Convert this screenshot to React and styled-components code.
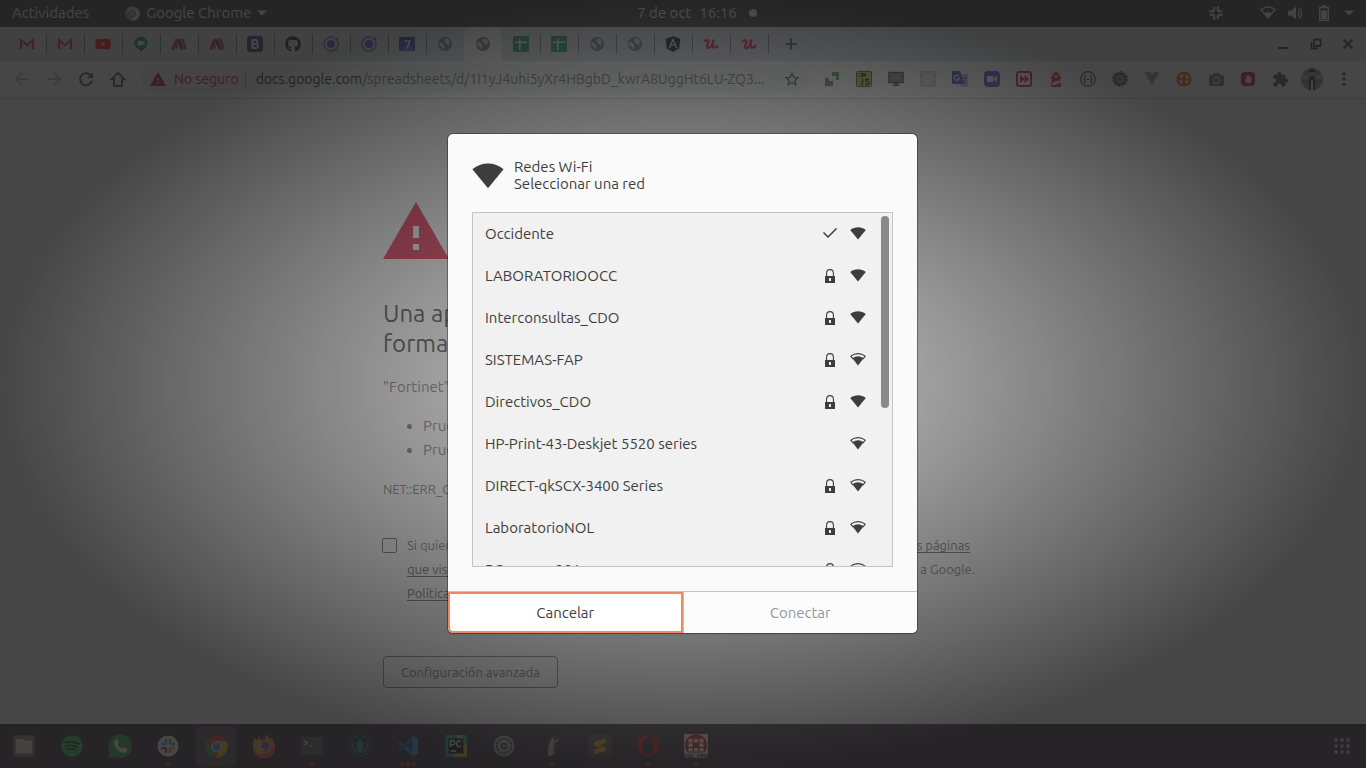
import React from 'react';
import styled, { createGlobalStyle } from 'styled-components';
import {
  FaGithub, FaAngular, FaSpotify,
  FaHandPaper, FaCamera, FaYoutube, FaOpera,
} from 'react-icons/fa';
import { MdExtension } from 'react-icons/md';

const Global = createGlobalStyle`
  *, *::before, *::after { box-sizing: border-box; }
  body { margin: 0; background: #fff; }
  body, button, input { font-family: Ubuntu, 'Noto Sans', 'Open Sans', sans-serif; }
  button { padding: 0; border: 0; background: none; color: inherit; font-size: inherit; }
  svg { display: block; flex: none; }
`;

const Desktop = styled.div`
  position: relative;
  display: flex;
  flex-direction: column;
  min-height: 100vh;
  overflow: hidden;
`;

/* ---------- system bar ---------- */

const TopBar = styled.header`
  display: grid;
  grid-template-columns: 1fr auto 1fr;
  align-items: center;
  height: 27px;
  padding: 0 12px 1px;
  background: #373737;
  color: #f2f2f2;
  font-size: 15px;
  line-height: 20px;
`;

const BarGroup = styled.div`
  display: flex;
  align-items: center;
  justify-content: ${(p) => (p.$end ? 'flex-end' : 'flex-start')};
  gap: ${(p) => p.$gap}px;
`;

const BarButton = styled.button`
  display: flex;
  align-items: center;
  gap: 6px;
  line-height: 20px;
`;

const Clock = styled(BarButton)`
  gap: 8px;
  padding-left: 32px;
`;

/* ---------- browser ---------- */

const TabStrip = styled.div`
  display: flex;
  align-items: center;
  height: 34px;
  padding: 0 10px 0 8px;
  background: #dee1e6;
`;

const Tab = styled.button`
  position: relative;
  display: grid;
  place-items: center;
  width: 38px;
  height: 34px;
  border-radius: 8px 8px 0 0;
  background: ${(p) => (p.$active ? '#fff' : 'transparent')};

  &::after {
    content: '';
    display: ${(p) => (p.$divider ? 'block' : 'none')};
    position: absolute;
    right: -1px;
    top: 7px;
    width: 1px;
    height: 20px;
    background: #74787c;
  }
`;

const NewTab = styled.button`
  display: grid;
  place-items: center;
  width: 46px;
  height: 34px;
`;

const WindowControls = styled.div`
  display: flex;
  gap: 16px;
  margin-left: auto;
`;

const Toolbar = styled.div`
  display: flex;
  align-items: center;
  height: 38px;
  padding: 0 6px 1px;
  border-bottom: 1px solid #c8cacd;
  background: #fff;
`;

const ToolButton = styled.button`
  display: grid;
  place-items: center;
  flex: none;
  width: 32px;
  height: 32px;
`;

const Omnibox = styled.div`
  display: flex;
  align-items: center;
  flex: 1;
  min-width: 0;
  height: 28px;
  margin: 0 6px;
  padding: 0 2px 0 10px;
  border-radius: 14px;
  background: #f1f3f4;
  font-size: 14px;
`;

const Danger = styled.span`
  display: flex;
  align-items: center;
  gap: 8px;
  flex: none;
  margin-right: 10px;
  padding-right: 6px;
  border-right: 1px solid #9aa0a6;
  color: #d50a24;
  line-height: 16px;
`;

const Address = styled.div`
  flex: 1;
  min-width: 0;
  overflow: hidden;
  white-space: nowrap;
  text-overflow: ellipsis;
  color: #5f6368;
  line-height: 20px;

  b { color: #101114; font-weight: 400; }
`;

/* ---------- blocked page ---------- */

const Page = styled.main`
  flex: 1;
  background: #fff;
  color: #5f6368;
`;

const Notice = styled.div`
  max-width: 600px;
  margin: 0 auto;
  padding: 103px 0 36px;
  font-size: 15px;
  line-height: 24px;
`;

const Title = styled.h1`
  margin: 40px 0 16px;
  color: #202124;
  font-size: 24px;
  font-weight: 400;
  line-height: 30px;
`;

const Paragraph = styled.p`
  margin: 0;
`;

const Tips = styled.ul`
  margin: 15px 0;
  padding-left: 40px;
`;

const ErrorCode = styled.div`
  font-size: 13px;
`;

const OptIn = styled.div`
  display: flex;
  gap: 10px;
  margin-top: 32px;
  font-size: 13px;
`;

const Checkbox = styled.input`
  appearance: none;
  flex: none;
  width: 15px;
  height: 15px;
  margin: 5px 0 0 -1px;
  border: 1px solid #4a4d52;
  border-radius: 2px;
`;

const OptInText = styled.label`
  flex: 1;
  padding-right: 8px;
`;

const SplitLine = styled.span`
  display: flex;
  justify-content: space-between;
  padding-right: ${(p) => (p.$short ? 5 : 0)}px;
  white-space: nowrap;
`;

const Link = styled.a`
  color: #4a4d52;
  text-underline-offset: 2px;
`;

const Advanced = styled.button`
  height: 32px;
  margin-top: 51px;
  padding: 0 17px;
  border: 1px solid #6a6e73;
  border-radius: 4px;
  font-size: 13px;
`;

/* ---------- dock ---------- */

const Dock = styled.nav`
  display: flex;
  align-items: center;
  height: 44px;
  background: #3c323c;
`;

const DockItem = styled.button`
  display: grid;
  place-items: center;
  position: relative;
  width: 40px;
  height: 40px;
  margin: 0 4px;
  border-radius: 3px;
  background: ${(p) => (p.$active ? '#5e545e' : 'transparent')};
  margin-left: ${(p) => (p.$last ? 'auto' : '4px')};
`;

const RunDots = styled.span`
  position: absolute;
  bottom: 0;
  left: 0;
  display: flex;
  justify-content: center;
  gap: 2px;
  width: 100%;

  i { width: 4px; height: 4px; border-radius: 2px; background: #e9440f; }
`;

/* ---------- modal ---------- */

const Shade = styled.div`
  position: absolute;
  inset: 0;
  display: flex;
  align-items: center;
  justify-content: center;
  padding: 0 1px 1px 0;
  background:
    radial-gradient(
      ellipse farthest-side at center,
      rgba(0, 0, 0, 0.19),
      rgba(0, 0, 0, 0.725)
    ),
    rgba(255, 255, 255, 0.4);
`;

const Dialog = styled.section`
  width: 469px;
  overflow: hidden;
  border-radius: 5px;
  background: #fafafa;
  box-shadow: 0 0 0 1px rgba(0, 0, 0, 0.3), 0 1px 2px rgba(0, 0, 0, 0.15);
  color: #3d3d3d;
  font-size: 15px;
`;

const DialogBody = styled.div`
  display: flex;
  flex-direction: column;
  gap: 20px;
  padding: 24px;
`;

const DialogHead = styled.div`
  display: flex;
  align-items: center;
  gap: 10px;
  line-height: 17px;
`;

const DialogTitle = styled.h2`
  margin: 0;
  font-size: 15px;
  font-weight: 400;
`;

const DialogHint = styled.p`
  margin: 0;
`;

const ListFrame = styled.div`
  position: relative;
  height: 355px;
  overflow: hidden;
  border: 1px solid #c4c4c4;
  background: #f1f1f1;
`;

const List = styled.ul`
  margin: 0;
  padding: 0;
  list-style: none;
`;

const Network = styled.button`
  display: flex;
  align-items: center;
  gap: 12px;
  width: 100%;
  height: 42px;
  padding: 0 26px 2px 12px;
  text-align: left;

  span { flex: 1; }
`;

const Thumb = styled.div`
  position: absolute;
  top: 3px;
  right: 3px;
  width: 8px;
  height: 192px;
  border-radius: 4px;
  background: #898989;
`;

const Actions = styled.div`
  display: grid;
  grid-template-columns: 1fr 1fr;
  border-top: 1px solid #c4c4c4;
`;

const Action = styled.button`
  height: 41px;
  border: ${(p) => (p.$focused ? '2px solid #f08763' : '0 solid #c4c4c4')};
  border-left-width: ${(p) => (p.$focused ? 2 : 1)}px;
  border-radius: ${(p) => (p.$focused ? '0 0 0 5px' : '0')};
  background: ${(p) => (p.$focused ? '#fff' : '#fcfcfc')};
  color: ${(p) => (p.$focused ? '#3d3d3d' : '#8f999c')};
`;

/* ---------- icons ---------- */

const Svg = ({ s = 16, v = 16, children, ...rest }) => (
  <svg width={s} height={s} viewBox={`0 0 ${v} ${v}`} aria-hidden="true" {...rest}>{children}</svg>
);

const Wifi = ({ size = 16, weak }) => (
  <Svg s={size} fill="currentColor">
    {weak ? (
      <>
        <path d="M.8 5.100C5 1.800 11 1.800 15.200 5.100L13.200 7.600C10.200 5.100 5.800 5.100 2.800 7.600Z" fill="none" stroke="currentColor" strokeWidth="1.100" />
        <path d="M2.800 7.800C6 5.300 10 5.300 13.200 7.800L8 14.400Z" />
      </>
    ) : (
      <path d="M.2 5.100C4.600 1.300 11.400 1.300 15.800 5.100L8 14.600Z" />
    )}
  </Svg>
);

const Lock = () => (
  <Svg fill="#3d3d3d">
    <path d="M4.600 9V6a3.400 3.400 0 0 1 6.800 0V9" fill="none" stroke="#3d3d3d" strokeWidth="1.100" />
    <path fillRule="evenodd" d="M3 9h10v7H3zM7 11v3h2v-3z" />
  </Svg>
);

const Check = () => (
  <Svg><path d="M1.500 7.500 6 12 14.500 3.500" fill="none" stroke="#3d3d3d" strokeWidth="1.500" /></Svg>
);

const Gmail = () => (
  <Svg><path d="M2 13V4l6 5 6-5v9" fill="none" stroke="#d93025" strokeWidth="2.200" /></Svg>
);

const Meet = () => (
  <Svg>
    <circle cx="8" cy="7" r="6.500" fill="#00897b" />
    <path d="M5 12h6l-2.500 4z" fill="#00897b" />
    <path d="M4.500 4.800h4.800v1.500l2-1.300v4.300l-2-1.300v1.500H4.500z" fill="#fff" />
  </Svg>
);

const Blades = () => (
  <Svg>
    <path d="M4.500 2.500h3L3.600 13.500H0z" fill="#d3204e" />
    <path d="M7 4 9 2.500 13 13.500H9.800L6 6.500z" fill="#453a94" />
    <path d="M5 6.500 7 11l-1.300 2.500L4 9.500zM10 2.500h2.500L16 13.500h-2.500z" fill="#d3204e" />
  </Svg>
);

const Bootstrap = () => (
  <Svg>
    <rect width="16" height="16" rx="3" fill="#4b2478" />
    <path d="M4.500 3h4.700a2.500 2.500 0 0 1 1 4.600A2.800 2.800 0 0 1 9.400 13H4.500zM6.700 7h2a1.050 1.050 0 0 0 0-2.100h-2zm0 4.100h2.200a1.200 1.200 0 0 0 0-2.400H6.700z" fill="#fff" fillRule="evenodd" />
  </Svg>
);

const Ionic = () => (
  <Svg>
    <path d="M10.800 1.600A7 7 0 1 0 14.500 5.400" fill="none" stroke="#6466e0" strokeWidth="1.500" />
    <circle cx="8" cy="8" r="4" fill="#4f52d6" />
    <circle cx="13.500" cy="3" r="1.600" fill="#4f52d6" />
  </Svg>
);

const Seven = () => (
  <Svg>
    <path d="M0 1h16v14H0z" fill="#3340b4" />
    <path d="M0 1h16l-8 4z" fill="#232c86" />
    <path d="M0 15l5-5h6l5 5z" fill="#5068dc" />
    <path d="M5.500 5h5.200L8 12.500" fill="none" stroke="#fff" strokeWidth="1.600" />
  </Svg>
);

const Globe = () => (
  <Svg>
    <circle cx="8" cy="8" r="7" fill="#70757a" />
    <path d="M2 7q1.500-1.500 3-.5T7 9t0 4.500L5 11 2.500 9.500zM8.500 2.500q3-.5 4.800 2.500-1.300.3-1.500 1.500t1.800 1.500Q12 9.500 10.200 8.500T8.500 6q-1.500-.5-1.500-1.500t1.500-2z" fill="#dee1e6" />
  </Svg>
);

const Sheets = () => (
  <Svg>
    <rect width="16" height="16" rx="1" fill="#0a9a52" />
    <path d="M6.800 3v11M2 6.200h12" stroke="#fff" strokeWidth="1.600" />
  </Svg>
);

const Udemy = () => (
  <Svg fill="none" stroke="#e60f50">
    <path d="M1.500 5.500C4 3.500 6 4 5.200 6.500 4 10 3.500 12 5.500 12s4-4 5-8.500C9.500 8 9.300 11.500 11 11.700s2.500-1 4-2.200" strokeWidth="2.300" />
  </Svg>
);

const SlackMark = () => (
  <Svg fill="none" stroke="#f2f2f2" strokeWidth="2" strokeLinecap="round">
    <path d="M6.200 5.500V2.500M5.500 6.200H2M9.800 2v4M10.500 6.200H13.500M9.800 10.500v3M10.500 9.800H14M6.200 14v-4M5.500 9.800H2.500" />
  </Svg>
);

const ChromeIcon = ({ s, mono }) => (
  <Svg s={s} v="24">
    <circle cx="12" cy="12" r="11.500" fill={mono ? '#bdbdbd' : '#ea4335'} />
    <path d="M2.100 6.200 8 15l4 1.500-3.500 7A11.500 11.500 0 0 1 2.100 6.200z" fill={mono ? '#8e8e8e' : '#34a853'} />
    <path d="M12 6.500h10.100A11.500 11.500 0 0 1 11 23.500L17 14z" fill={mono ? '#e8e8e8' : '#fbbc05'} />
    <circle cx="12" cy="12" r="5.400" fill={mono ? '#606060' : '#fff'} />
    <circle cx="12" cy="12" r="4.200" fill={mono ? '#aaa' : '#4285f4'} />
  </Svg>
);

const Warning = ({ w = 16, hole = '#f1f3f4', fill = '#c5101f' }) => (
  <svg width={w} height={Math.round(w * 0.86)} viewBox="0 0 66 57" aria-hidden="true">
    <path d="M33 0 66 57H0z" fill={fill} />
    <path d="M30 24h6v12h-6zM30 42h6v6h-6z" fill={hole} />
  </svg>
);

const Caret = () => (
  <svg width="10" height="6" viewBox="0 0 10 6" aria-hidden="true"><path d="M0 .5h10L5 5.500z" fill="currentColor" /></svg>
);

const Arrow = ({ flip }) => (
  <Svg><path d={flip ? 'M1 8h13M8 2l6 6-6 6' : 'M15 8H2M8 2 2 8l6 6'} fill="none" stroke="#b9bcc0" strokeWidth="1.800" /></Svg>
);

const Reload = () => (
  <Svg>
    <path d="M13.200 5A6 6 0 1 0 14 9.500" fill="none" stroke="#4a4d52" strokeWidth="2" />
    <path d="M15 1v6H9z" fill="#4a4d52" />
  </Svg>
);

const Home = () => (
  <Svg><path d="M8 1.800 1.500 8.300H4V15h8V8.300h2.500z" fill="none" stroke="#4a4d52" strokeWidth="1.900" /></Svg>
);

const Star = () => (
  <Svg s={14}><path d="M8 1.500l2 4.600 5 .4-3.800 3.300 1.200 4.900L8 12l-4.400 2.700 1.200-4.900L1 6.500l5-.4z" fill="none" stroke="#4a4d52" strokeWidth="1.500" /></Svg>
);

const Plus = () => (
  <Svg s={14}><path d="M8 1.500v13M1.500 8h13" stroke="#3c4043" strokeWidth="2" /></Svg>
);

const tabs = [
  ['Gmail', <Gmail />], ['Gmail', <Gmail />], ['YouTube', <FaYoutube size={16} color="#f00" />],
  ['Meet', <Meet />], ['Panel', <Blades />], ['Panel', <Blades />], ['Bootstrap', <Bootstrap />],
  ['GitHub', <FaGithub size={16} color="#14181c" />], ['Ionic', <Ionic />], ['Ionic', <Ionic />],
  ['Calendario', <Seven />], ['Página', <Globe />], ['Error de privacidad', <Globe />],
  ['Hoja', <Sheets />], ['Hoja', <Sheets />], ['Página', <Globe />], ['Página', <Globe />],
  ['Angular', <FaAngular size={18} color="#05090c" />], ['Udemy', <Udemy />], ['Udemy', <Udemy />],
];
const activeTab = 12;

const extensions = [
  ['Capturar', <Svg><path d="M8 1h7v8h-3V5H8z" fill="#3f9a45" /><path d="M1 7h4v3h4v5H1z" fill="#6b6f74" /></Svg>],
  ['JavaScript', (
    <Svg>
      <rect x=".5" y=".5" width="15" height="15" rx="1" fill="#c8ba1c" stroke="#4a4410" />
      <rect x="2" y="2" width="8" height="4" rx="2" fill="#222" /><circle cx="4" cy="4" r="1.200" fill="#ddd" />
      <path d="M6.500 7.500V12q0 1.700-2 1.700M13 8.500q-3.500-1-3.300.8c.2 1.700 3.500.8 3.300 2.900-.2 2-2.700 1.500-3.800.8" fill="none" stroke="#111" strokeWidth="1.500" />
    </Svg>
  )],
  ['Pantalla', <Svg><rect x="1" y="1.500" width="14" height="10" fill="#6f8a5c" stroke="#2c2f33" strokeWidth="1.400" /><path d="M6.500 12h3v1.500h2V15h-7v-1.500h2z" fill="#4a4d52" /></Svg>],
  ['React', (
    <Svg>
      <rect width="16" height="16" fill="#cdcfd1" />
      <g fill="none" stroke="#f4f4f4"><ellipse cx="8" cy="8" rx="6" ry="2.400" /><ellipse cx="8" cy="8" rx="6" ry="2.400" transform="rotate(60 8 8)" /><ellipse cx="8" cy="8" rx="6" ry="2.400" transform="rotate(120 8 8)" /></g>
    </Svg>
  )],
  ['Traductor', (
    <Svg>
      <path d="M5 3h11v13H9z" fill="#b8bbbf" /><path d="M0 0h8l4 13H0z" fill="#2347cf" />
      <path d="M7 5A2.600 2.600 0 1 0 7.500 7H5.200" fill="none" stroke="#fff" strokeWidth="1.200" />
      <path d="M10 7h5M12.500 6v1M11 12c2-1 3-3 3-5M11 8.500l3.500 4" fill="none" stroke="#55595e" />
    </Svg>
  )],
  ['Zoom', <Svg><rect width="16" height="16" rx="4" fill="#2d4fd8" /><path d="M3 5h6.500v6H3zM10.300 7 13 5v6l-2.700-2z" fill="#fff" /></Svg>],
  ['Adelantar', <Svg><rect x="1" y="1" width="14" height="14" rx="2" fill="none" stroke="#d00a26" strokeWidth="2" /><path d="M4 4l4.500 4L4 12zM8.500 4 13 8l-4.500 4z" fill="#d00a26" /></Svg>],
  ['Lighthouse', <Svg><path d="M4.500 5.500 4.800 3 8 .3 11.200 3l.3 2.500H13V8h-1l1 8H3l1-8H3V5.500z" fill="#e01410" /><path d="M6 3.500h4V7H6z" fill="#d8ac48" /><path d="M4.500 11.500l7-2.500.5 3-7.800 2.700z" fill="#fff" /></Svg>],
  ['JSON', <Svg><circle cx="8" cy="8" r="7.300" fill="none" stroke="#3a3a3a" strokeWidth="1.200" /><path d="M6 4.500q-1.500 0-1.300 1.700T3.500 8q1.400 0 1.200 1.800T6 11.500M10 4.500q1.500 0 1.300 1.700T12.500 8q-1.400 0-1.200 1.800T10 11.500M6.500 8.500h3" fill="none" stroke="#3a3a3a" strokeWidth="1.200" /></Svg>],
  ['Ajustes', <Svg><circle cx="8" cy="8" r="6.700" fill="#666" stroke="#5a5a5a" strokeWidth="2.400" strokeDasharray="2 1.500" /><circle cx="8" cy="8" r="3.600" fill="#bbb" /><circle cx="8" cy="8" r="2" fill="#555" /></Svg>],
  ['Vue', <Svg><path d="M0 1h6l2 3.500L10 1h6L8 15z" fill="#a4a7aa" /><path d="M3 1h3l2 3.500L10 1h3L8 9.800z" fill="#85888c" /></Svg>],
  ['Recursos', <Svg><circle cx="8" cy="8" r="7.600" fill="#e85a14" /><circle cx="8" cy="8" r="4" fill="none" stroke="#fff" strokeWidth="2.600" strokeDasharray="3.140 3.140" strokeDashoffset="-1.570" /></Svg>],
  ['Cámara', <FaCamera size={15} color="#74787c" />],
  ['Bloqueador', <Svg><rect x="1" y="1" width="14" height="14" rx="4" fill="#d8081a" /><g transform="translate(4 4)"><FaHandPaper size={8} color="#fff" /></g></Svg>],
  ['Extensiones', <MdExtension size={17} color="#4a4f56" />],
  ['Perfil', (
    <Svg s={22} v="22">
      <circle cx="11" cy="11" r="11" fill="#8c8f88" /><path d="M1 7h20v4H1z" fill="#b4bab4" />
      <path d="M8 8h6l1 7h-1v7H8v-7H7z" fill="#4a352c" /><path d="M10 12h2v10h-2z" fill="#e6dfd4" /><circle cx="11" cy="5.500" r="3" fill="#b58266" /><path d="M8 4a3 3 0 0 1 6 0z" fill="#1e1512" />
    </Svg>
  )],
  ['Menú', <Svg fill="#4a4d52"><circle cx="8" cy="2.800" r="1.700" /><circle cx="8" cy="8" r="1.700" /><circle cx="8" cy="13.200" r="1.700" /></Svg>],
];

const dockItems = [
  { name: 'Archivos', icon: <Svg s={22} v="22"><rect width="22" height="22" rx="2" fill="#7d7563" /><rect x="1.500" y="1.500" width="19" height="19" rx="1" fill="#968e7b" /><path d="M3 6q0-2 2-2h5l1.500 1.500H17q2 0 2 2V17q0 1-1 1H4q-1 0-1-1z" fill="#f0ede6" /></Svg> },
  { name: 'Spotify', icon: <FaSpotify size={22} color="#1ed760" /> },
  { name: 'WhatsApp', icon: (
    <Svg s={24} v="24">
      <path d="M12 0a12 12 0 1 1-5.500 22.600L0 24l1.800-6A12 12 0 0 1 12 0z" fill="#35b04f" />
      <path d="M7.500 5.500 9.500 5 11 9l-1.500 1.500Q11 13.500 14 14.800l1.700-1.600 3.600 1.800-.6 2.500q-1.500 2-5 .8-6-2-7.500-8-.6-3 1.300-4.800z" fill="#fff" />
    </Svg>
  ) },
  { name: 'Slack', run: 1, icon: (
    <Svg s={22} v="22">
      <circle cx="11" cy="11" r="10.500" fill="#fff" />
      <g fill="none" strokeWidth="2.200" strokeLinecap="round">
        <path d="M9 5v4M5 9h3" stroke="#36c5f0" /><path d="M13 5v3.500M17 9h-3" stroke="#2eb67d" />
        <path d="M13 13.500V17M17 13h-3" stroke="#ecb22e" /><path d="M9 13.500V17M5 13h3.500" stroke="#e01e5a" />
      </g>
    </Svg>
  ) },
  { name: 'Chrome', run: 1, active: true, icon: <ChromeIcon s={23} /> },
  { name: 'Firefox', icon: (
    <Svg s={24} v="24">
      <path d="M2 5.500 3 4l2 2.500L7 3l2 3 3.500-1L14 0q2 3 4 4.500l1-1Q23 8 23 13a11 11 0 0 1-22 0Q.8 9 2 5.500z" fill="#ff9a2e" />
      <path d="M23 12A11 11 0 0 1 1.200 15Q5 21 12 20q8-1.500 7-9z" fill="#ff4f5e" />
      <circle cx="12" cy="12.500" r="5" fill="#7a4bd6" /><path d="M4 8q4-2 7 1l-2 2.500Q10 15 14 14q-1 3.500-5 3-5-1.500-5-9z" fill="#ffb13b" />
    </Svg>
  ) },
  { name: 'Terminal', run: 1, icon: <Svg s={22} v="22"><rect y="2" width="22" height="18" rx="2" fill="#5c635e" /><path d="M3 6l3.500 2L3 10M7 11h4" fill="none" stroke="#f4f4f4" strokeWidth="1.200" /></Svg> },
  { name: 'GitKraken', icon: <Svg s={22} v="22"><circle cx="11" cy="11" r="10.400" fill="#2f3a3c" stroke="#5a8f8c" /><path d="M11 3q-3.500 4-3.500 8 1.500 1 2 7h3q.5-6 2-7Q14.500 7 11 3z" fill="#2fa596" /><path d="M5 6q-3 6 3 11M17 6q3 6-3 11" fill="none" stroke="#2f8f86" strokeWidth="1.400" /></Svg> },
  { name: 'Visual Studio Code', run: 3, icon: <Svg s={22} v="22"><path d="M15.500 1 21 3.500v15L15.500 21 1 8.500 3 6.500l12.500 9z" fill="#2489ca" /><path d="M15.500 1 21 3.500v15L15.500 21V6.500L3 16 1 13.800z" fill="#1070b3" /><path d="M15.500 1 21 3.500v15L15.500 21z" fill="#3ba7e8" /></Svg> },
  { name: 'PyCharm', icon: (
    <Svg s={22} v="22">
      <path d="M0 0h22v22H0z" fill="#21a87a" /><path d="M12 0h4l6 10v12H8z" fill="#c9c43a" /><path d="M16 0h6v11z" fill="#2bb08a" /><path d="M0 14h8l-2 8H0z" fill="#2a93c4" /><path d="M3.500 3.500h15v15h-15z" fill="#101010" />
      <path d="M5.500 12V5.800H8q1.800.2 1.800 1.900T8 9.700H5.500M16.200 6.700Q12 4.500 11.700 8.800q.3 4.400 4.500 2.200M5.500 16h5.500" fill="none" stroke="#fff" strokeWidth="1.400" />
    </Svg>
  ) },
  { name: 'Configuración', icon: <Svg s={22} v="22"><circle cx="11" cy="11" r="10.500" fill="#b4b4b4" /><circle cx="11" cy="11" r="8.300" fill="#4a474b" /><circle cx="11" cy="11" r="6.300" fill="none" stroke="#c4c4c4" strokeWidth="2" strokeDasharray="2 1.300" /><circle cx="11" cy="11" r="4.500" fill="none" stroke="#c4c4c4" strokeWidth="2" /><path d="M10 9l3 2-3 2z" fill="#c4c4c4" /></Svg> },
  { name: 'DBeaver', run: 1, icon: <Svg s={22} v="22"><path d="M4 3q8-4 13 0 4 8-1 17H6Q2 12 4 3z" fill="#3f3634" /><path d="M7 21Q6 10 11 3q5-3 7 1-.5 2.500-4 3-2 5-1 12-3 2-6 2z" fill="#b9b2a6" /><path d="M12 3.500q3-3 5.500.5L14 6z" fill="#4a3b33" /><path d="M14 8q-2 5-1 11 3-1 4-4 1-5-3-7z" fill="#5a4c40" /></Svg> },
  { name: 'Sublime Text', icon: <Svg s={24} v="24"><rect width="24" height="24" rx="2" fill="#4e4e4e" /><path d="M18 4v5l-7 2.300 7 2.200v3.500L6 20.500V16l7-2.300-7-2.200V8z" fill="#ff9800" /></Svg> },
  { name: 'Opera', run: 1, icon: <FaOpera size={22} color="#e8101c" /> },
  { name: 'SSL VPN', run: 1, icon: (
    <Svg s={24} v="24">
      <path d="M0 0h24v24H0z" fill="#e8e8e8" /><circle cx="12" cy="11" r="11" fill="#d0241c" />
      <path d="M4.500 5h4v3.500h-4zM10 5h4v3.500h-4zM15.500 5h4v3.500h-4zM4.500 9.500h4V13h-4zM15.500 9.500h4V13h-4zM4.500 14h4v3.500h-4zM10 14h4v3.500h-4zM15.500 14h4v3.500h-4z" fill="#fff" />
      <path d="M0 18.500h24V24H0z" fill="#ddd" />
      <text x="12" y="23.500" textAnchor="middle" fontSize="6" fontWeight="700" fontFamily="Liberation Sans, sans-serif" fill="#222">SSL VPN</text>
    </Svg>
  ) },
];

const networks = [
  { name: 'Occidente', mark: 'check' },
  { name: 'LABORATORIOOCC', mark: 'lock' },
  { name: 'Interconsultas_CDO', mark: 'lock' },
  { name: 'SISTEMAS-FAP', mark: 'lock', weak: true },
  { name: 'Directivos_CDO', mark: 'lock' },
  { name: 'HP-Print-43-Deskjet 5520 series', weak: true },
  { name: 'DIRECT-qkSCX-3400 Series', mark: 'lock', weak: true },
  { name: 'LaboratorioNOL', mark: 'lock', weak: true },
  { name: 'PCcamara 201', mark: 'lock', weak: true },
];

export default function App() {
  return (
    <>
      <Global />
      <Desktop>
        <TopBar>
          <BarGroup $gap={36}>
            <BarButton>Actividades</BarButton>
            <BarButton><ChromeIcon s={15} mono />Google Chrome<Caret /></BarButton>
          </BarGroup>
          <Clock>
            <span>7 de oct</span><span>16:16</span>
            <Svg s={16}><circle cx="8" cy="8" r="4" fill="#f2f2f2" /></Svg>
          </Clock>
          <BarGroup $gap={12} $end>
            <SlackMark />
            <Svg s={12} v="12" />
            <Svg><path d="M1 4.500q7-5 14 0L8 13z" fill="none" stroke="#f2f2f2" strokeWidth="1.300" /><path d="M4.500 8.300q3.500-2 7 0L8 13z" fill="#f2f2f2" /></Svg>
            <Svg><path d="M0 5.500h3.500L8 1.500v13l-4.500-4H0z" fill="#f2f2f2" /><path d="M10 5q2 3 0 6M11.500 2.500q4 5.500 0 11" fill="none" stroke="#f2f2f2" strokeWidth="1.300" /></Svg>
            <Svg><path d="M3.700 2.500h8.600v12.800H3.700zM6 1h4" fill="none" stroke="#f2f2f2" strokeWidth="1.400" /><path d="M5.200 5.500h5.600v8.500H5.200z" fill="#f2f2f2" /></Svg>
            <Caret />
          </BarGroup>
        </TopBar>

        <TabStrip>
          {tabs.map(([name, icon], i) => (
            <Tab key={i} aria-label={name} $active={i === activeTab} $divider={i !== activeTab && i !== activeTab - 1}>
              {icon}
            </Tab>
          ))}
          <NewTab aria-label="Nueva pestaña"><Plus /></NewTab>
          <WindowControls>
            <button aria-label="Minimizar"><Svg><path d="M2 12h10" stroke="#303236" strokeWidth="2" /></Svg></button>
            <button aria-label="Restaurar"><Svg><path d="M6 3.500h6.500V10H6zM3.500 6v6.500H10" fill="none" stroke="#303236" strokeWidth="1.800" /></Svg></button>
            <button aria-label="Cerrar"><Svg><path d="M3.500 3.500l9 9M12.500 3.500l-9 9" stroke="#303236" strokeWidth="2" /></Svg></button>
          </WindowControls>
        </TabStrip>

        <Toolbar>
          <ToolButton aria-label="Atrás"><Arrow /></ToolButton>
          <ToolButton aria-label="Adelante"><Arrow flip /></ToolButton>
          <ToolButton aria-label="Recargar"><Reload /></ToolButton>
          <ToolButton aria-label="Inicio"><Home /></ToolButton>
          <Omnibox>
            <Danger><Warning />No seguro</Danger>
            <Address><b>docs.google.com</b>/spreadsheets/d/1I1yJ4uhi5yXr4HBgbD_kwrA8UggHt6LU-ZQ3...</Address>
            <ToolButton aria-label="Añadir a favoritos"><Star /></ToolButton>
          </Omnibox>
          {extensions.map(([name, icon]) => (
            <ToolButton key={name} aria-label={name}>{icon}</ToolButton>
          ))}
        </Toolbar>

        <Page>
          <Notice>
            <Warning w={66} hole="#fff" fill="#e3082f" />
            <Title>Una aplicación impide que Chrome se conecte de<br />forma segura a este sitio web</Title>
            <Paragraph>"Fortinet" no se ha instalado correctamente en tu ordenador.</Paragraph>
            <Tips>
              <li>Prueba a desinstalar o inhabilitar "Fortinet"</li>
              <li>Prueba a conectarte a otra red</li>
            </Tips>
            <ErrorCode>NET::ERR_CERT_AUTHORITY_INVALID</ErrorCode>
            <OptIn>
              <Checkbox type="checkbox" id="optin" />
              <OptInText htmlFor="optin">
                <SplitLine $short><span>Si quieres mejorar la seguridad de Chrome,</span><Link href="#datos">envía URLs de algunas páginas</Link></SplitLine>
                <SplitLine><Link href="#datos">que visitas, información del sistema</Link><span>y contenido de páginas a Google.</span></SplitLine>
                <Link href="#privacidad">Política de privacidad</Link>
              </OptInText>
            </OptIn>
            <Advanced>Configuración avanzada</Advanced>
          </Notice>
        </Page>

        <Dock>
          {dockItems.map((d) => (
            <DockItem key={d.name} aria-label={d.name} $active={d.active}>
              {d.icon}
              {d.run && <RunDots>{Array.from({ length: d.run }, (_, i) => <i key={i} />)}</RunDots>}
            </DockItem>
          ))}
          <DockItem aria-label="Mostrar aplicaciones" $last>
            <Svg fill="#c8c5c8">
              {[2, 8, 14].map((y) => [2, 8, 14].map((x) => <circle key={`${x}-${y}`} cx={x} cy={y} r="1.900" />))}
            </Svg>
          </DockItem>
        </Dock>

        <Shade>
          <Dialog role="dialog" aria-labelledby="wifi-title">
            <DialogBody>
              <DialogHead>
                <Wifi size={32} />
                <div>
                  <DialogTitle id="wifi-title">Redes Wi-Fi</DialogTitle>
                  <DialogHint>Seleccionar una red</DialogHint>
                </div>
              </DialogHead>
              <ListFrame>
                <List>
                  {networks.map((n) => (
                    <li key={n.name}>
                      <Network>
                        <span>{n.name}</span>
                        {n.mark === 'check' && <Check />}
                        {n.mark === 'lock' && <Lock />}
                        <Wifi weak={n.weak} />
                      </Network>
                    </li>
                  ))}
                </List>
                <Thumb />
              </ListFrame>
            </DialogBody>
            <Actions>
              <Action $focused>Cancelar</Action>
              <Action disabled>Conectar</Action>
            </Actions>
          </Dialog>
        </Shade>
      </Desktop>
    </>
  );
}
